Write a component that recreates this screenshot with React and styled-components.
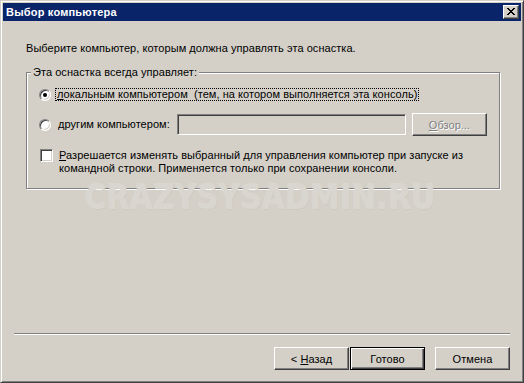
import React from 'react';
import styled, { createGlobalStyle, css } from 'styled-components';

const Global = createGlobalStyle`
  html, body { margin: 0; padding: 0; background: #D4D0C8; }
  body { font-family: "Liberation Sans", Arial, sans-serif; font-size: 11px; letter-spacing: 0.05px; color: #000; }
  * { box-sizing: border-box; }
`;

const Window = styled.div`
  position: relative;
  width: 524px;
  height: 383px;
  display: flex;
  flex-direction: column;
  background: #D4D0C8;
  border: 1px solid;
  border-color: #D4D0C8 #404040 #404040 #D4D0C8;
  box-shadow: inset 1px 1px 0 #fff, inset -1px -1px 0 #808080;
  padding: 2px;
  overflow: hidden;
`;

const TitleBar = styled.div`
  height: 18px;
  flex: 0 0 18px;
  background: #0A246A;
  color: #fff;
  font-weight: bold;
  font-size: 11px;
  letter-spacing: 0.2px;
  display: flex;
  align-items: center;
  justify-content: space-between;
  padding: 0 2px 0 3px;
`;

const CloseButton = styled.div`
  width: 16px;
  height: 14px;
  background: #D4D0C8;
  border: 1px solid;
  border-color: #fff #404040 #404040 #fff;
  box-shadow: inset -1px -1px 0 #808080;
  display: flex;
  align-items: center;
  justify-content: center;
  padding: 0 1px 1px 0;
`;

const Body = styled.div`
  flex: 1;
  margin-top: 1px;
  display: flex;
  flex-direction: column;
`;

const Content = styled.div`
  flex: 1;
  padding: 20px 21px 0 23px;
  display: flex;
  flex-direction: column;
`;

const Intro = styled.div`
  line-height: 13px;
`;

const GroupBox = styled.div`
  position: relative;
  margin-top: 17px;
  border: 1px solid #808080;
  box-shadow: inset 1px 1px 0 #fff, 1px 1px 0 #fff;
  padding: 15px 12px 13px 12px;
  display: flex;
  flex-direction: column;
`;

const Legend = styled.div`
  position: absolute;
  top: -7px;
  left: 4px;
  padding: 0 2px;
  background: #D4D0C8;
  line-height: 13px;
`;

const OptionRow = styled.div`
  display: flex;
  align-items: center;
  height: ${p => p.$h}px;
  margin-bottom: ${p => p.$mb || 0}px;
`;

const Radio = styled.div`
  position: relative;
  width: 12px;
  height: 12px;
  flex: 0 0 12px;
  border-radius: 50%;
  background: #fff;
  border: 1px solid;
  border-color: #808080 #fff #fff #808080;
  box-shadow: inset 1px 1px 0 #404040, inset -1px -1px 0 #D4D0C8;
  ${p => p.$checked && css`
    &::after {
      content: '';
      position: absolute;
      left: 3px;
      top: 3px;
      width: 4px;
      height: 4px;
      border-radius: 50%;
      background: #000;
    }
  `}
`;

const RadioText = styled.span`
  display: inline-block;
  margin-left: ${p => p.$focus ? 4 : 5}px;
  line-height: 11px;
  padding: 0 1px;
  border: 1px ${p => p.$focus ? 'dotted #000' : 'solid transparent'};
  white-space: pre;
  ${p => p.$w && css`width: ${p.$w}px;`}
`;

const Edit = styled.div`
  width: 230px;
  height: 21px;
  background: #D4D0C8;
  border: 1px solid;
  border-color: #808080 #fff #fff #808080;
  box-shadow: inset 1px 1px 0 #404040, inset -1px -1px 0 #D4D0C8;
`;

const Button = styled.div`
  width: 75px;
  height: 23px;
  flex: 0 0 75px;
  display: flex;
  align-items: center;
  justify-content: center;
  white-space: pre;
  background: #D4D0C8;
  border: 1px solid;
  border-color: #fff #404040 #404040 #fff;
  box-shadow: inset -1px -1px 0 #808080;
  margin-left: ${p => p.$ml || 0}px;
  color: ${p => p.$disabled ? '#808080' : '#000'};
  ${p => p.$disabled && css`text-shadow: 1px 1px 0 #fff;`}
  ${p => p.$default && css`
    border-color: #000;
    box-shadow: inset 1px 1px 0 #fff, inset -1px -1px 0 #404040, inset -2px -2px 0 #808080;
  `}
`;

const CheckRow = styled.div`
  display: flex;
  align-items: flex-start;
`;

const CheckBox = styled.div`
  width: 13px;
  height: 13px;
  flex: 0 0 13px;
  margin-left: 1px;
  background: #fff;
  border: 1px solid;
  border-color: #808080 #fff #fff #808080;
  box-shadow: inset 1px 1px 0 #404040, inset -1px -1px 0 #D4D0C8;
`;

const CheckText = styled.div`
  margin-left: 6px;
  line-height: 13px;
`;

const Separator = styled.div`
  margin: 0 11px;
  border-top: 1px solid #808080;
  border-bottom: 1px solid #fff;
`;

const ButtonRow = styled.div`
  display: flex;
  justify-content: flex-end;
  padding: 12px 11px 10px 0;
`;

const Watermark = styled.div`
  position: absolute;
  left: 84px;
  top: 177px;
  font-family: "DejaVu Sans Condensed", "DejaVu Sans", sans-serif;
  font-weight: bold;
  font-size: 33px;
  letter-spacing: 0.3px;
  color: #D9D6CF;
  text-shadow: -1px -1px 0 rgba(255,255,255,0.18), 1px 1px 0 rgba(0,0,0,0.03);
  pointer-events: none;
  white-space: nowrap;
`;

const CloseGlyph = () => (
  <svg width="8" height="7" viewBox="0 0 8 7" shapeRendering="crispEdges">
    <g fill="#000">
      <rect x="0" y="0" width="2" height="1" />
      <rect x="6" y="0" width="2" height="1" />
      <rect x="1" y="1" width="2" height="1" />
      <rect x="5" y="1" width="2" height="1" />
      <rect x="2" y="2" width="4" height="1" />
      <rect x="3" y="3" width="2" height="1" />
      <rect x="2" y="4" width="4" height="1" />
      <rect x="1" y="5" width="2" height="1" />
      <rect x="5" y="5" width="2" height="1" />
      <rect x="0" y="6" width="2" height="1" />
      <rect x="6" y="6" width="2" height="1" />
    </g>
  </svg>
);

export default function App() {
  return (
    <>
      <Global />
      <Window>
        <TitleBar>
          <span>Выбор компьютера</span>
          <CloseButton><CloseGlyph /></CloseButton>
        </TitleBar>
        <Body>
          <Content>
            <Intro>Выберите компьютер, которым должна управлять эта оснастка.</Intro>
            <GroupBox>
              <Legend>Эта оснастка всегда управляет:</Legend>
              <OptionRow $h={13} $mb={12}>
                <Radio $checked />
                <RadioText $focus><u>л</u>окальным компьютером  (тем, на котором выполняется эта консоль)</RadioText>
              </OptionRow>
              <OptionRow $h={23} $mb={13}>
                <Radio />
                <RadioText $w={121}><u>д</u>ругим компьютером:</RadioText>
                <Edit />
                <Button $ml={6} $disabled><span><u>О</u>бзор...</span></Button>
              </OptionRow>
              <CheckRow>
                <CheckBox />
                <CheckText>
                  <u>Р</u>азрешается изменять выбранный для управления компьютер при запуске из<br />
                  командной строки. Применяется только при сохранении консоли.
                </CheckText>
              </CheckRow>
            </GroupBox>
          </Content>
          <Separator />
          <ButtonRow>
            <Button><span>&lt; <u>Н</u>азад</span></Button>
            <Button $default $ml={1}>Готово</Button>
            <Button $ml={10}>Отмена</Button>
          </ButtonRow>
        </Body>
        <Watermark>CRAZYSYSADMIN.RU</Watermark>
      </Window>
    </>
  );
}
